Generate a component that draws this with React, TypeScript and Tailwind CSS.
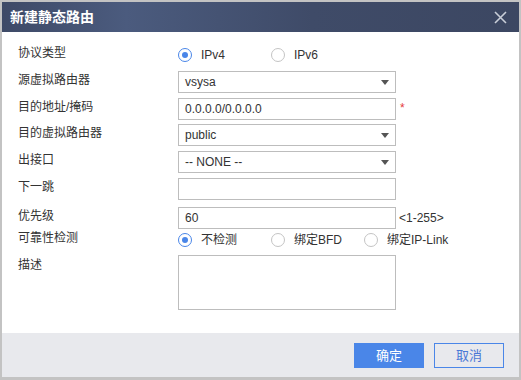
import React from 'react';

const font = { fontFamily: '"Liberation Sans", "Noto Sans CJK SC", Arial, sans-serif' };

function Radio({ checked, label }: { checked?: boolean; label: string }) {
  return (
    <label className="flex items-center w-[93px] shrink-0">
      <span
        className={`flex items-center justify-center w-[14px] h-[14px] rounded-full border bg-white ${
          checked ? 'border-[#4a86e8]' : 'border-[#c4c4c4]'
        }`}
      >
        {checked && <span className="w-[6px] h-[6px] rounded-full bg-[#4a86e8]" />}
      </span>
      <span className="ml-[9px] text-[12px] text-[#333]">{label}</span>
    </label>
  );
}

function Select({ value }: { value: string }) {
  return (
    <div className="flex items-center justify-between w-[218px] h-[22px] border border-[#bdbdbd] bg-white pl-[6px] pr-[6px]">
      <span className="text-[12px] text-[#333]">{value}</span>
      <svg width="8" height="5" viewBox="0 0 8 5">
        <path d="M0 0 H8 L4 5 Z" fill="#555" />
      </svg>
    </div>
  );
}

function Input({ value = '', h = 'h-[22px]' }: { value?: string; h?: string }) {
  return (
    <div className={`flex items-center w-[218px] ${h} border border-[#bdbdbd] bg-white pl-[6px]`}>
      <span className="text-[12px] text-[#333]">{value}</span>
    </div>
  );
}

function Row({ label, children, className = '' }: { label: string; children: React.ReactNode; className?: string }) {
  return (
    <div className={`flex items-center ${className}`}>
      <div className="w-[160px] shrink-0 text-[12px] text-[#333] -mt-[4px]">{label}</div>
      <div className="flex items-center">{children}</div>
    </div>
  );
}

export default function App() {
  return (
    <div style={font} className="w-[521px] h-[380px] border-2 border-b-[3px] border-[#c3c3c3] flex flex-col bg-white">
      {/* title */}
      <div className="h-[30px] shrink-0 flex items-center justify-between pl-[8px] pr-[12px] bg-[linear-gradient(90deg,#3e4a67_0%,#4b5b7e_24%,#3f4b68_60%,#3c4762_100%)]">
        <span className="text-white font-bold text-[14px]">新建静态路由</span>
        <svg width="13" height="13" viewBox="0 0 13 13">
          <path d="M1 1 L12 12 M12 1 L1 12" stroke="#c9ced8" strokeWidth="1.6" />
        </svg>
      </div>

      {/* body */}
      <div className="flex-1 pl-[16px] pt-[12px]">
        <Row label="协议类型" className="h-[22px]">
          <Radio checked label="IPv4" />
          <Radio label="IPv6" />
        </Row>
        <Row label="源虚拟路由器" className="mt-[5px]">
          <Select value="vsysa" />
        </Row>
        <Row label="目的地址/掩码" className="mt-[5px]">
          <Input value="0.0.0.0/0.0.0.0" />
          <span className="ml-[4px] text-[12px] text-[#e5393a] -mt-[2px]">*</span>
        </Row>
        <Row label="目的虚拟路由器" className="mt-[4px]">
          <Select value="public" />
        </Row>
        <Row label="出接口" className="mt-[5px]">
          <Select value="-- NONE --" />
        </Row>
        <Row label="下一跳" className="mt-[5px]">
          <Input />
        </Row>
        <Row label="优先级" className="mt-[7px]">
          <Input value="60" />
          <span className="ml-[3px] text-[12px] text-[#333]">&lt;1-255&gt;</span>
        </Row>
        <Row label="可靠性检测" className="h-[22px]">
          <Radio checked label="不检测" />
          <Radio label="绑定BFD" />
          <Radio label="绑定IP-Link" />
        </Row>
        <div className="flex items-start mt-[4px]">
          <div className="w-[160px] shrink-0 text-[12px] text-[#333] pt-[1px]">描述</div>
          <Input h="h-[55px]" />
        </div>
      </div>

      {/* footer */}
      <div className="h-[44px] shrink-0 bg-[#e8e9ed] flex items-start justify-end pt-[10px] pr-[15px] gap-[10px]">
        <button className="w-[70px] h-[25px] bg-[#4a86e8] text-white text-[13px]">确定</button>
        <button className="w-[70px] h-[25px] border border-[#4a86e8] text-[#4a78d6] text-[13px]">取消</button>
      </div>
    </div>
  );
}
